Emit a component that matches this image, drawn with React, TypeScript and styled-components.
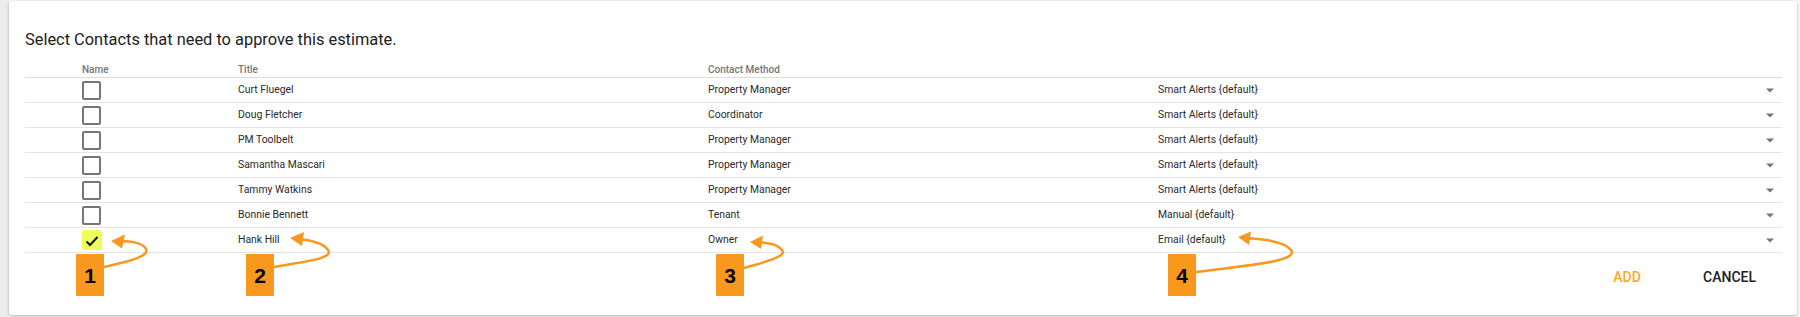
import React from "react";
import styled, { createGlobalStyle } from "styled-components";

const GlobalStyle = createGlobalStyle`
  html, body {
    margin: 0;
    padding: 0;
    background: #ededed;
    font-family: Roboto, "Noto Sans", Arial, sans-serif;
  }
`;

const Page = styled.div`
  min-height: 317px;
  box-sizing: border-box;
  padding: 1px 3px 2px 9px;
  background: linear-gradient(to right, #ececec 0 9px, #f6f6f6 9px);
`;

const Card = styled.section`
  position: relative;
  background: #fff;
  border-radius: 3px;
  box-shadow: 0 1px 3px rgba(0, 0, 0, 0.28);
  padding: 29px 15px 0 16px;
  height: 314px;
  box-sizing: border-box;
`;

const Heading = styled.h2`
  margin: 0;
  font-size: 16.4px;
  line-height: 20px;
  font-weight: 400;
  color: #212121;
`;

const Row = styled.div<{ $header?: boolean }>`
  display: grid;
  grid-template-columns: 213px 470px 450px 1fr;
  align-items: ${(p) => (p.$header ? "end" : "center")};
  height: ${(p) => (p.$header ? "26px" : "24px")};
  border-bottom: 1px solid ${(p) => (p.$header ? "#dcdcdc" : "#e4e4e4")};
  font-size: ${(p) => (p.$header ? "10px" : "10.4px")};
  line-height: ${(p) => (p.$header ? "12px" : "24px")};
  font-weight: ${(p) => (p.$header ? 500 : 400)};
  color: ${(p) => (p.$header ? "#757575" : "#2a2a2a")};
  padding-bottom: ${(p) => (p.$header ? "1px" : "0")};
  box-sizing: content-box;
`;

const NameCell = styled.div`
  padding-left: 57px;
  display: flex;
  align-items: center;
`;

const Cell = styled.div`
  white-space: nowrap;
`;

const SelectCell = styled.div`
  display: flex;
  align-items: center;
  justify-content: space-between;
  padding-right: 8px;
`;

const Box = styled.span<{ $checked?: boolean }>`
  width: ${(p) => (p.$checked ? "20px" : "19px")};
  height: ${(p) => (p.$checked ? "20px" : "19px")};
  box-sizing: border-box;
  border: ${(p) => (p.$checked ? "none" : "2px solid #767676")};
  border-radius: 2px;
  background: ${(p) => (p.$checked ? "#edff58" : "transparent")};
  display: flex;
  align-items: center;
  justify-content: center;
`;

const Footer = styled.div`
  display: flex;
  justify-content: flex-end;
  gap: 28px;
  padding: 6px 10px 0 0;
`;

const Button = styled.button<{ $primary?: boolean }>`
  height: 36px;
  min-width: 64px;
  padding: 0 16px;
  border: none;
  background: transparent;
  font-family: Roboto, Arial, sans-serif;
  font-size: 14px;
  font-weight: 500;
  color: ${(p) => (p.$primary ? "#f9a825" : "#212121")};
  text-transform: uppercase;
`;

const Badge = styled.span<{ $left: number }>`
  position: absolute;
  left: ${(p) => p.$left}px;
  top: 253px;
  width: 28px;
  height: 42px;
  background: #f8981d;
  color: #000;
  font-family: "Liberation Sans", Arial, sans-serif;
  font-weight: 700;
  font-size: 21px;
  display: flex;
  align-items: center;
  justify-content: center;
  padding-top: 1px;
  box-sizing: border-box;
`;

const Overlay = styled.svg`
  position: absolute;
  left: 0;
  top: 0;
  pointer-events: none;
`;

const Caret = () => (
  <svg width="8" height="5" viewBox="0 0 8 5">
    <path d="M0 0.5h8L4 4.5z" fill="#757575" />
  </svg>
);

const Check = () => (
  <svg width="20" height="20" viewBox="0 0 20 20">
    <path d="M4.5 11.5l3.5 3.5 7.5-8" fill="none" stroke="#111" strokeWidth="2" />
  </svg>
);

const contacts = [
  { name: "Curt Fluegel", title: "Property Manager", method: "Smart Alerts {default}" },
  { name: "Doug Fletcher", title: "Coordinator", method: "Smart Alerts {default}" },
  { name: "PM Toolbelt", title: "Property Manager", method: "Smart Alerts {default}" },
  { name: "Samantha Mascari", title: "Property Manager", method: "Smart Alerts {default}" },
  { name: "Tammy Watkins", title: "Property Manager", method: "Smart Alerts {default}" },
  { name: "Bonnie Bennett", title: "Tenant", method: "Manual {default}" },
  { name: "Hank Hill", title: "Owner", method: "Email {default}", checked: true },
];

// arrows in page coords, the svg viewBox shifts by card offset
const arrows = [
  { d: "M104 267 C 125 262, 150 257, 146 249 C 143 243, 132 241, 118 241", head: "111,241 125,234.5 122,248.5" },
  { d: "M274 267 C 300 262, 335 259, 328 250 C 323 243, 312 240, 297 239", head: "290,238 304,232 302,246" },
  { d: "M744 268 C 765 262, 790 256, 781 249 C 777 244, 768 243, 757 242", head: "750,242 763,235.5 761,249" },
  { d: "M1196 272 C 1240 266, 1300 262, 1291 250 C 1285 242, 1265 239, 1245 238", head: "1238,237 1251,231.5 1249,245" },
];

const badges = [
  { n: "1", left: 67 },
  { n: "2", left: 237 },
  { n: "3", left: 707 },
  { n: "4", left: 1159 },
];

export default function App() {
  return (
    <Page>
      <GlobalStyle />
      <Card>
        <Heading>Select Contacts that need to approve this estimate.</Heading>
        <Row $header>
          <NameCell>Name</NameCell>
          <Cell>Title</Cell>
          <Cell>Contact Method</Cell>
          <Cell />
        </Row>
        {contacts.map((c) => (
          <Row key={c.name}>
            <NameCell>
              <Box $checked={c.checked}>{c.checked && <Check />}</Box>
            </NameCell>
            <Cell>{c.name}</Cell>
            <Cell>{c.title}</Cell>
            <SelectCell>
              <span>{c.method}</span>
              <Caret />
            </SelectCell>
          </Row>
        ))}
        <Footer>
          <Button $primary>Add</Button>
          <Button>Cancel</Button>
        </Footer>
        {badges.map((b) => (
          <Badge key={b.n} $left={b.left}>
            {b.n}
          </Badge>
        ))}
        <Overlay width="1787" height="314" viewBox="9 1 1787 314">
          {arrows.map((a, i) => (
            <g key={i}>
              <path d={a.d} fill="none" stroke="#f8981d" strokeWidth="2.5" strokeLinecap="round" />
              <polygon points={a.head} fill="#f8981d" />
            </g>
          ))}
        </Overlay>
      </Card>
    </Page>
  );
}
